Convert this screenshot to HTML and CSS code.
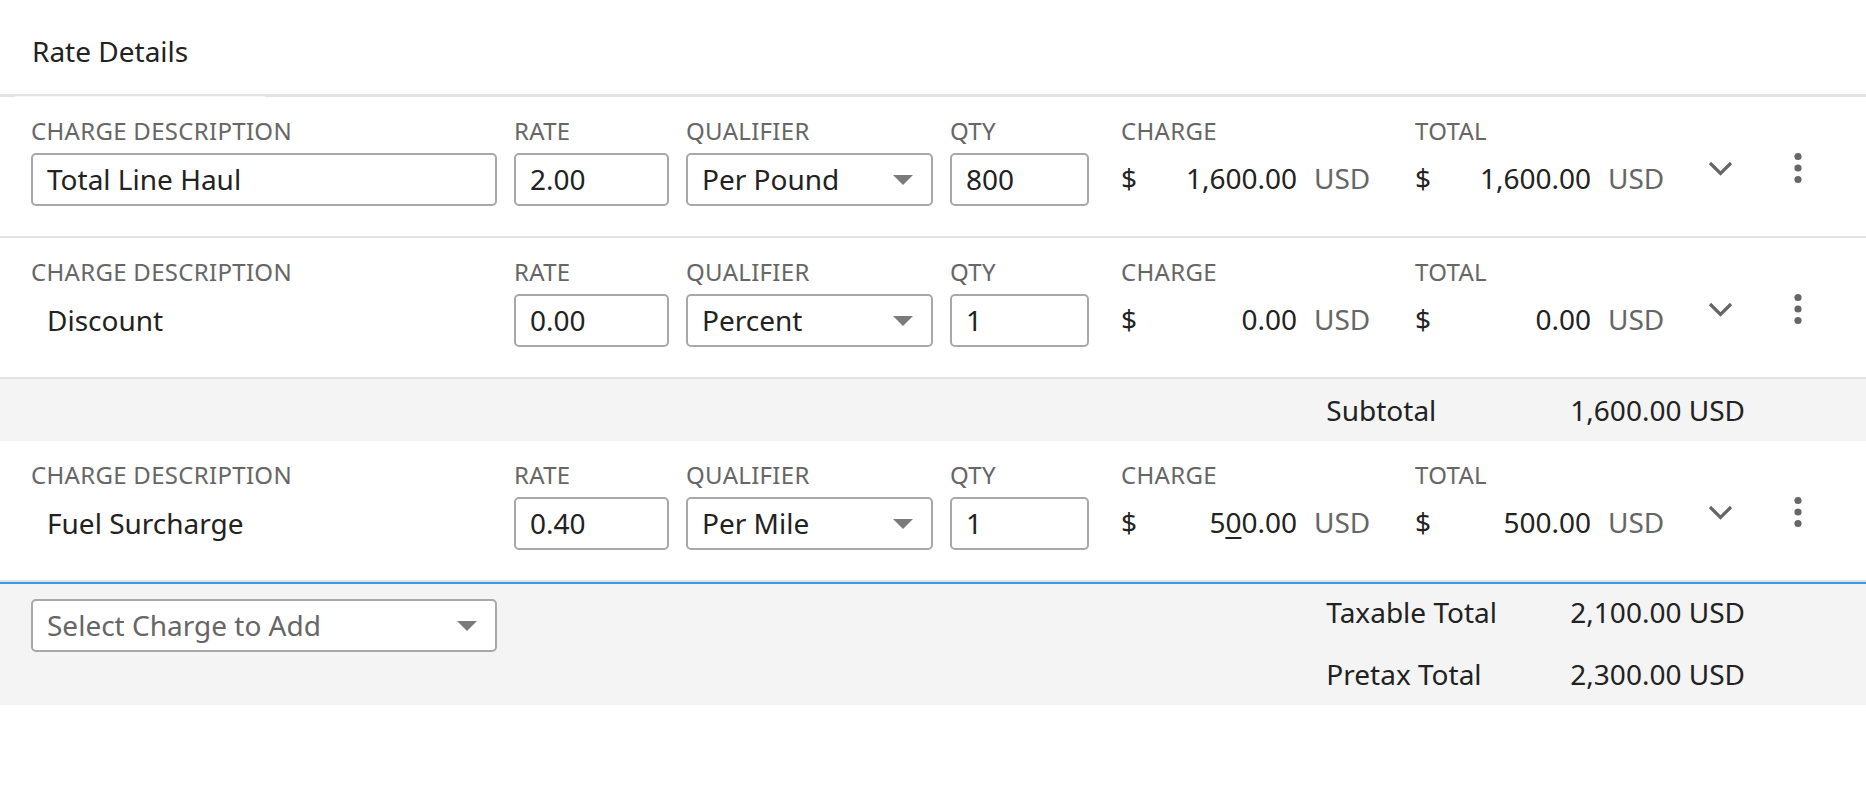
FILE: index.html
```html
<!DOCTYPE html>
<html lang="en">
<head>
<meta charset="utf-8">
<title>Rate Details</title>
<link rel="stylesheet" href="styles.css">
</head>
<body>
<div class="panel">
  <div class="header">
    <div class="tab">Rate Details</div>
  </div>

  <div class="row">
    <div class="field desc"><label>CHARGE DESCRIPTION</label><div class="box">Total Line Haul</div></div>
    <div class="field rate"><label>RATE</label><div class="box">2.00</div></div>
    <div class="field qual"><label>QUALIFIER</label><div class="box select"><span>Per Pound</span><svg class="tri" width="20" height="10" viewBox="0 0 20 10"><path d="M0 0H20L10 10Z"/></svg></div></div>
    <div class="field qty"><label>QTY</label><div class="box">800</div></div>
    <div class="field charge"><label>CHARGE</label><div class="money"><span class="cur">$</span><span class="amt">1,600.00</span><span class="usd">USD</span></div></div>
    <div class="field total"><label>TOTAL</label><div class="money"><span class="cur">$</span><span class="amt">1,600.00</span><span class="usd">USD</span></div></div>
    <div class="actions">
      <svg class="icon" width="40" height="40" viewBox="0 0 40 40"><path d="M10 15L20.5 25.5L31 15" fill="none" stroke="#666" stroke-width="3.2"/></svg>
      <svg class="icon" width="40" height="40" viewBox="0 0 40 40"><circle cx="20" cy="8.5" r="3.6" fill="#666"/><circle cx="20" cy="20" r="3.6" fill="#666"/><circle cx="20" cy="31.5" r="3.6" fill="#666"/></svg>
    </div>
  </div>

  <div class="row">
    <div class="field desc"><label>CHARGE DESCRIPTION</label><div class="plain">Discount</div></div>
    <div class="field rate"><label>RATE</label><div class="box">0.00</div></div>
    <div class="field qual"><label>QUALIFIER</label><div class="box select"><span>Percent</span><svg class="tri" width="20" height="10" viewBox="0 0 20 10"><path d="M0 0H20L10 10Z"/></svg></div></div>
    <div class="field qty"><label>QTY</label><div class="box">1</div></div>
    <div class="field charge"><label>CHARGE</label><div class="money"><span class="cur">$</span><span class="amt">0.00</span><span class="usd">USD</span></div></div>
    <div class="field total"><label>TOTAL</label><div class="money"><span class="cur">$</span><span class="amt">0.00</span><span class="usd">USD</span></div></div>
    <div class="actions">
      <svg class="icon" width="40" height="40" viewBox="0 0 40 40"><path d="M10 15L20.5 25.5L31 15" fill="none" stroke="#666" stroke-width="3.2"/></svg>
      <svg class="icon" width="40" height="40" viewBox="0 0 40 40"><circle cx="20" cy="8.5" r="3.6" fill="#666"/><circle cx="20" cy="20" r="3.6" fill="#666"/><circle cx="20" cy="31.5" r="3.6" fill="#666"/></svg>
    </div>
  </div>

  <div class="band">
    <div class="sum-line"><span class="sum-label">Subtotal</span><span class="sum-value">1,600.00 USD</span></div>
  </div>

  <div class="row last">
    <div class="field desc"><label>CHARGE DESCRIPTION</label><div class="plain">Fuel Surcharge</div></div>
    <div class="field rate"><label>RATE</label><div class="box">0.40</div></div>
    <div class="field qual"><label>QUALIFIER</label><div class="box select"><span>Per Mile</span><svg class="tri" width="20" height="10" viewBox="0 0 20 10"><path d="M0 0H20L10 10Z"/></svg></div></div>
    <div class="field qty"><label>QTY</label><div class="box">1</div></div>
    <div class="field charge"><label>CHARGE</label><div class="money"><span class="cur">$</span><span class="amt">5<span class="cursor">0</span>0.00</span><span class="usd">USD</span></div></div>
    <div class="field total"><label>TOTAL</label><div class="money"><span class="cur">$</span><span class="amt">500.00</span><span class="usd">USD</span></div></div>
    <div class="actions">
      <svg class="icon" width="40" height="40" viewBox="0 0 40 40"><path d="M10 15L20.5 25.5L31 15" fill="none" stroke="#666" stroke-width="3.2"/></svg>
      <svg class="icon" width="40" height="40" viewBox="0 0 40 40"><circle cx="20" cy="8.5" r="3.6" fill="#666"/><circle cx="20" cy="20" r="3.6" fill="#666"/><circle cx="20" cy="31.5" r="3.6" fill="#666"/></svg>
    </div>
  </div>

  <div class="footer">
    <div class="box select add"><span>Select Charge to Add</span><svg class="tri" width="20" height="10" viewBox="0 0 20 10"><path d="M0 0H20L10 10Z"/></svg></div>
    <div class="footer-totals">
      <div class="sum-line"><span class="sum-label">Taxable Total</span><span class="sum-value">2,100.00 USD</span></div>
      <div class="sum-line"><span class="sum-label">Pretax Total</span><span class="sum-value">2,300.00 USD</span></div>
    </div>
  </div>
</div>
</body>
</html>
```

FILE: styles.css
```css
html, body {
  margin: 0;
  padding: 0;
  background: #ffffff;
}

body {
  font-family: "Noto Sans", "Open Sans", sans-serif;
  color: #222222;
}

.header {
  height: 94px;
  padding-left: 15px;
  border-bottom: 3px solid #e3e3e3;
}

.tab {
  position: relative;
  width: 250px;
  box-sizing: border-box;
  padding: 32px 0 24px 17px;
  font-size: 28px;
  line-height: 38px;
  color: #222;
}

.tab::after {
  content: "";
  position: absolute;
  left: 0;
  right: 0;
  bottom: -3px;
  height: 1px;
  background: #f7f7f7;
}

.row {
  display: flex;
  align-items: flex-start;
  padding: 17px 0 30px 31px;
  border-bottom: 2px solid #e3e3e3;
  background: #fff;
}

.field label {
  display: block;
  font-size: 24px;
  line-height: 33px;
  letter-spacing: 0.3px;
  color: #666;
  margin-bottom: 6px;
  white-space: nowrap;
}

.desc { width: 466px; }
.rate { width: 155px; margin-left: 17px; }
.qual { width: 247px; margin-left: 17px; }
.qty { width: 139px; margin-left: 17px; }
.charge { width: 294px; margin-left: 32px; }
.total { width: 265px; }

.box {
  height: 53px;
  box-sizing: border-box;
  border: 2px solid #a8a8a8;
  border-radius: 5px;
  padding: 0 14px;
  font-size: 28px;
  line-height: 49px;
  color: #222;
  background: #fff;
  white-space: nowrap;
}

.select {
  display: flex;
  align-items: center;
  justify-content: space-between;
  padding-right: 18px;
}

.tri path {
  fill: #7b7b7b;
}

.plain {
  height: 53px;
  padding-left: 16px;
  font-size: 28px;
  line-height: 53px;
  color: #222;
}

.money {
  display: flex;
  align-items: center;
  height: 49px;
  font-size: 28px;
  color: #222;
  white-space: nowrap;
}

.cur {
  width: 16px;
}

.amt {
  width: 160px;
  text-align: right;
}

.cursor {
  text-decoration: underline;
  text-decoration-thickness: 2px;
  text-underline-offset: 4px;
}

.usd {
  margin-left: 17px;
  color: #666;
}

.actions {
  display: flex;
  gap: 38px;
  margin-left: 20px;
  margin-top: 34px;
}

.icon {
  display: block;
}

.band {
  background: #f4f4f4;
}

.sum-line {
  display: flex;
  align-items: center;
  justify-content: flex-end;
  height: 62px;
  padding-right: 121px;
  font-size: 28px;
  color: #222;
  white-space: nowrap;
}

.sum-label {
  width: 244px;
}

.row.last {
  border-bottom: 2px solid #e3e3e3;
}

.footer {
  display: flex;
  justify-content: space-between;
  align-items: flex-start;
  background: #f4f4f4;
  border-top: 2px solid #3b98ec;
}

.add {
  width: 466px;
  margin: 15px 0 0 31px;
  color: #666;
}

.footer-totals {
  margin-top: -3px;
}
```
